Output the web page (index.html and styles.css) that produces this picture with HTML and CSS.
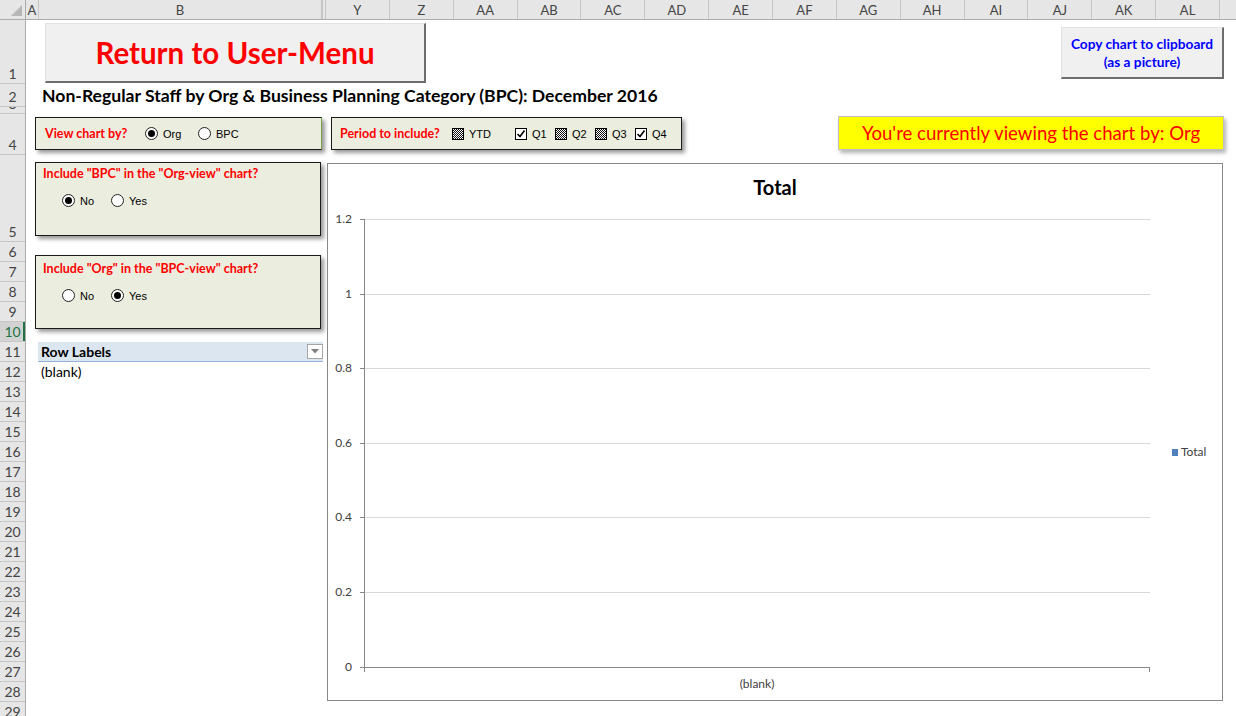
FILE: index.html
```html
<!DOCTYPE html>
<html lang="en">
<head>
  <meta charset="UTF-8">
  <title>Non-Regular Staff by Org &amp; BPC</title>
  <link rel="stylesheet" href="styles.css">
</head>
<body>
  <div class="sheet">
    <!-- column headers (C..X are hidden) -->
    <div class="col-heads">
      <div class="corner"></div>
      <div class="ch col-a">A</div>
      <div class="ch col-b">B</div>
      <div class="ch hidden-cols"></div>
      <div class="ch col">Y</div>
      <div class="ch col">Z</div>
      <div class="ch col">AA</div>
      <div class="ch col">AB</div>
      <div class="ch col">AC</div>
      <div class="ch col">AD</div>
      <div class="ch col">AE</div>
      <div class="ch col">AF</div>
      <div class="ch col">AG</div>
      <div class="ch col">AH</div>
      <div class="ch col">AI</div>
      <div class="ch col">AJ</div>
      <div class="ch col">AK</div>
      <div class="ch col">AL</div>
      <div class="ch col-rest"></div>
    </div>

    <div class="sheet-body">
      <div class="row-heads">
        <div class="rh h1">1</div>
        <div class="rh h2">2</div>
        <div class="rh h3">3</div>
        <div class="rh h4">4</div>
        <div class="rh h5">5</div>
        <div class="rh">6</div>
        <div class="rh">7</div>
        <div class="rh">8</div>
        <div class="rh">9</div>
        <div class="rh active">10</div>
        <div class="rh">11</div>
        <div class="rh">12</div>
        <div class="rh">13</div>
        <div class="rh">14</div>
        <div class="rh">15</div>
        <div class="rh">16</div>
        <div class="rh">17</div>
        <div class="rh">18</div>
        <div class="rh">19</div>
        <div class="rh">20</div>
        <div class="rh">21</div>
        <div class="rh">22</div>
        <div class="rh">23</div>
        <div class="rh">24</div>
        <div class="rh">25</div>
        <div class="rh">26</div>
        <div class="rh">27</div>
        <div class="rh">28</div>
        <div class="rh">29</div>
      </div>

      <div class="cells">
        <div class="row h1"></div>
        <div class="row h2"><div class="sheet-title">Non-Regular Staff by Org &amp; Business Planning Category (BPC): December 2016</div></div>
        <div class="row h3"></div>
        <div class="row h4"></div>
        <div class="row h5"></div>
        <div class="row"></div>
        <div class="row"></div>
        <div class="row"></div>
        <div class="row"></div>
        <div class="row"></div>
        <div class="row">
          <div class="pivot-head">
            <span>Row Labels</span>
            <span class="dropdown"><svg width="8" height="5" viewBox="0 0 8 5"><path d="M0 0h8L4 4.5z" fill="#7f7f7f"/></svg></span>
          </div>
        </div>
        <div class="row"><div class="pivot-cell">(blank)</div></div>

        <!-- floating shapes and form controls -->
        <div class="btn btn-return">Return to User-Menu</div>
        <div class="btn btn-copy">Copy chart to clipboard<br>(as a picture)</div>
        <div class="viewing">You're currently viewing the chart by: Org</div>

        <div class="ctl-box box-view">
          <span class="ctl-label">View chart by?</span>
          <span class="opt view-org"><span class="radio on"></span>Org</span>
          <span class="opt"><span class="radio"></span>BPC</span>
        </div>

        <div class="ctl-box box-period">
          <span class="ctl-label">Period to include?</span>
          <span class="opt ytd"><span class="check mixed"></span>YTD</span>
          <span class="opt q"><span class="check on"><svg width="10" height="10" viewBox="0 0 10 10"><path d="M1.5 5l2.5 2.5 4.5-6" fill="none" stroke="#000" stroke-width="1.6"/></svg></span>Q1</span>
          <span class="opt q"><span class="check mixed"></span>Q2</span>
          <span class="opt q"><span class="check mixed"></span>Q3</span>
          <span class="opt q"><span class="check on"><svg width="10" height="10" viewBox="0 0 10 10"><path d="M1.5 5l2.5 2.5 4.5-6" fill="none" stroke="#000" stroke-width="1.6"/></svg></span>Q4</span>
        </div>

        <div class="ctl-box box-tall box-bpc">
          <div class="ctl-label">Include "BPC" in the "Org-view" chart?</div>
          <div class="opts">
            <span class="opt yn"><span class="radio on"></span>No</span>
            <span class="opt yn"><span class="radio"></span>Yes</span>
          </div>
        </div>

        <div class="ctl-box box-tall box-org">
          <div class="ctl-label">Include "Org" in the "BPC-view" chart?</div>
          <div class="opts">
            <span class="opt yn"><span class="radio"></span>No</span>
            <span class="opt yn"><span class="radio on"></span>Yes</span>
          </div>
        </div>

        <div class="chart">
          <svg width="894" height="536" viewBox="0 0 894 536">
            <text class="chart-title" x="447" y="31" text-anchor="middle">Total</text>
            <g stroke="#d9d9d9" stroke-width="1">
              <line x1="36" y1="55.5" x2="822" y2="55.5"/>
              <line x1="36" y1="130.5" x2="822" y2="130.5"/>
              <line x1="36" y1="204.5" x2="822" y2="204.5"/>
              <line x1="36" y1="279.5" x2="822" y2="279.5"/>
              <line x1="36" y1="353.5" x2="822" y2="353.5"/>
              <line x1="36" y1="428.5" x2="822" y2="428.5"/>
            </g>
            <g stroke="#868686" stroke-width="1">
              <line x1="36.5" y1="55" x2="36.5" y2="508"/>
              <line x1="32" y1="55.5" x2="36" y2="55.5"/>
              <line x1="32" y1="130.5" x2="36" y2="130.5"/>
              <line x1="32" y1="204.5" x2="36" y2="204.5"/>
              <line x1="32" y1="279.5" x2="36" y2="279.5"/>
              <line x1="32" y1="353.5" x2="36" y2="353.5"/>
              <line x1="32" y1="428.5" x2="36" y2="428.5"/>
              <line x1="32" y1="503.5" x2="822" y2="503.5"/>
              <line x1="821.5" y1="503" x2="821.5" y2="508"/>
            </g>
            <g class="axis-label" text-anchor="end">
              <text x="24" y="59">1.2</text>
              <text x="24" y="134">1</text>
              <text x="24" y="208">0.8</text>
              <text x="24" y="283">0.6</text>
              <text x="24" y="357">0.4</text>
              <text x="24" y="432">0.2</text>
              <text x="24" y="507">0</text>
            </g>
            <text class="axis-label" x="429" y="524" text-anchor="middle">(blank)</text>
            <rect x="844" y="285" width="6" height="7" fill="#4f81bd"/>
            <text class="legend" x="853" y="292">Total</text>
          </svg>
        </div>
      </div>
    </div>
  </div>
</body>
</html>
```

FILE: styles.css
```css
body {
  margin: 0;
  background-color: #fff;
  font-family: Lato, 'Open Sans', sans-serif;
  color: #000;
}

.sheet {
  width: 1236px;
  height: 716px;
  overflow: hidden;
}

/* headers */
.col-heads {
  display: flex;
  height: 20px;
  background-color: #e6e6e6;
  border-bottom: 1px solid #ababab;
  box-sizing: border-box;
}

.ch {
  display: flex;
  align-items: center;
  justify-content: center;
  border-right: 1px solid #c6c6c6;
  box-sizing: border-box;
  font-size: 13px;
  color: #444;
}

.corner {
  flex: 0 0 26px;
  position: relative;
  border-right: 1px solid #ababab;
  box-sizing: border-box;
}

.corner::after {
  content: '';
  position: absolute;
  right: 3px;
  bottom: 3px;
  border-style: solid;
  border-width: 0 0 11px 11px;
  border-color: transparent transparent #b7b7b7 transparent;
}

.col-a { flex: 0 0 13px; }
.col-b { flex: 0 0 283px; }
.hidden-cols { flex: 0 0 4px; border-left: 1px solid #c6c6c6; }
.col { flex: 0 0 63.86px; }
.col-rest { flex: 1; border-right: none; }

.sheet-body {
  display: flex;
}

.row-heads {
  flex: 0 0 26px;
  background-color: #e6e6e6;
  border-right: 1px solid #ababab;
  box-sizing: border-box;
}

.rh {
  height: 20px;
  display: flex;
  align-items: flex-end;
  justify-content: center;
  border-bottom: 1px solid #c6c6c6;
  box-sizing: border-box;
  font-size: 14px;
  line-height: 18px;
  color: #444;
  overflow: hidden;
}

.rh.active {
  background-color: #d2d2d2;
  color: #217346;
  box-shadow: inset -2px 0 0 #217346;
}

/* cell area */
.cells {
  flex: 1;
  position: relative;
}

.row {
  height: 20px;
}

/* custom row heights, shared by row headers and rows */
.h1 { height: 64px; }
.h2 { height: 23px; }
.h3 { height: 7px; }
.h4 { height: 41px; }
.h5 { height: 87px; }

.sheet-title {
  padding: 2px 0 0 16px;
  font-size: 17.6px;
  font-weight: bold;
  line-height: 20px;
  white-space: nowrap;
}

.pivot-head {
  display: flex;
  align-items: center;
  justify-content: space-between;
  margin-left: 12px;
  width: 285px;
  height: 20px;
  padding: 0 0 0 3px;
  background-color: #dce6f1;
  border-bottom: 1px solid #95b3d7;
  box-sizing: border-box;
  font-size: 14px;
  font-weight: bold;
}

.dropdown {
  display: flex;
  align-items: center;
  justify-content: center;
  width: 16px;
  height: 15px;
  background-color: #fff;
  border: 1px solid #a6a6a6;
  box-sizing: border-box;
}

.pivot-cell {
  padding-left: 15px;
  font-size: 14px;
  line-height: 20px;
}

/* buttons */
.btn {
  position: absolute;
  display: flex;
  align-items: center;
  justify-content: center;
  text-align: center;
  background-color: #f0f0f0;
  border-top: 1px solid #e3e3e3;
  border-left: 1px solid #e3e3e3;
  border-right: 2px solid #6d6d6d;
  border-bottom: 2px solid #6d6d6d;
  box-sizing: border-box;
  font-weight: bold;
}

.btn-return {
  left: 19px;
  top: 3px;
  width: 381px;
  height: 60px;
  color: #ff0000;
  font-size: 29.5px;
}

.btn-copy {
  left: 1035px;
  top: 7px;
  width: 163px;
  height: 52px;
  color: #0000ff;
  font-size: 13.7px;
  line-height: 18px;
}

.viewing {
  position: absolute;
  left: 812px;
  top: 96px;
  width: 386px;
  height: 34px;
  display: flex;
  align-items: center;
  justify-content: center;
  background-color: #ffff00;
  border: 1px solid #bfbfbf;
  box-shadow: 2px 3px 4px rgba(0, 0, 0, 0.3);
  box-sizing: border-box;
  color: #ff0000;
  font-size: 18.6px;
}

/* form control boxes */
.ctl-box {
  position: absolute;
  background-color: #ebeddf;
  border: 1px solid #1a1a1a;
  box-shadow: 3px 3px 4px rgba(0, 0, 0, 0.4);
  box-sizing: border-box;
}

.ctl-label {
  color: #ff0000;
  font-size: 12.5px;
  font-weight: bold;
  line-height: 16px;
  white-space: nowrap;
}

.box-view,
.box-period {
  top: 97px;
  height: 33px;
  display: flex;
  align-items: center;
}

.box-view {
  left: 9px;
  width: 287px;
  padding-left: 9px;
  border-right-color: #77a04a;
}

.box-view .ctl-label { width: 100px; }
.view-org { width: 53px; }

.box-period {
  left: 305px;
  width: 351px;
  padding-left: 8px;
}

.box-period .ctl-label { width: 112px; }
.opt.ytd { width: 63px; }
.opt.q { width: 40px; }

.opt {
  display: inline-flex;
  align-items: center;
  gap: 5px;
  font-family: 'Liberation Sans', Arial, sans-serif;
  font-size: 11px;
  color: #000;
}

.radio {
  position: relative;
  width: 13px;
  height: 13px;
  border-radius: 50%;
  border: 1px solid #222;
  background-color: #fff;
  box-sizing: border-box;
}

.radio.on::after {
  content: '';
  position: absolute;
  left: 2px;
  top: 2px;
  width: 7px;
  height: 7px;
  border-radius: 50%;
  background-color: #000;
}

.check {
  display: inline-flex;
  align-items: center;
  justify-content: center;
  width: 12px;
  height: 12px;
  border: 1px solid #000;
  background-color: #fff;
  box-sizing: border-box;
}

.check.mixed {
  background: repeating-conic-gradient(#111 0 25%, #fff 0 50%) 0 0 / 2px 2px;
}

.box-tall {
  left: 9px;
  width: 286px;
  height: 74px;
  padding: 3px 0 0 7px;
}

.box-bpc { top: 142px; }
.box-org { top: 235px; padding-top: 5px; }

.opts {
  display: flex;
  margin: 12px 0 0 19px;
}

.opt.yn { width: 49px; }

/* chart */
.chart {
  position: absolute;
  left: 301px;
  top: 143px;
  width: 896px;
  height: 538px;
  border: 1px solid #888;
  box-sizing: border-box;
  background-color: #fff;
}

.chart svg {
  display: block;
  font-family: Lato, 'Open Sans', sans-serif;
}

.chart-title {
  font-size: 20px;
  font-weight: bold;
  fill: #000;
}

.axis-label {
  font-size: 12px;
  fill: #404040;
}

.legend {
  font-size: 12px;
  fill: #404040;
}
```
